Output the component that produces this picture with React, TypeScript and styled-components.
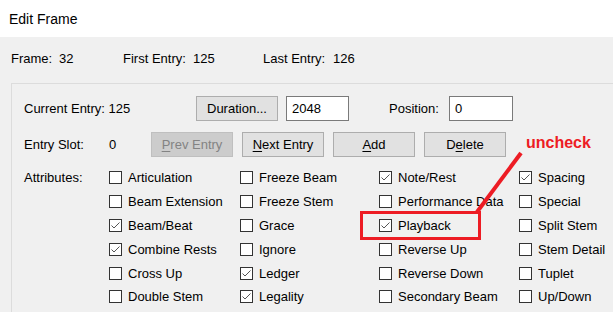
import styled, { createGlobalStyle } from 'styled-components';

const GlobalStyle = createGlobalStyle`
  html, body {
    margin: 0;
    padding: 0;
    background: #f0f0f0;
  }
  body {
    font-family: "Liberation Sans", Arial, sans-serif;
    font-size: 13px;
    color: #000;
  }
`;

const Window = styled.div`
  position: relative;
  width: 613px;
  height: 312px;
  overflow: hidden;
  background: #f0f0f0;
`;

const TitleBar = styled.div`
  height: 37px;
  background: #fff;
  display: flex;
  align-items: center;
  padding-left: 9px;
  font-size: 14px;
  color: #000;
`;

const InfoRow = styled.div`
  display: flex;
  padding: 13px 0 0 11px;
  height: 18px;
  line-height: 18px;
`;

const InfoItem = styled.div<{ $width: number; $labelWidth: number }>`
  display: flex;
  width: ${({ $width }) => $width}px;

  & > span:first-child {
    width: ${({ $labelWidth }) => $labelWidth}px;
  }
`;

const GroupBox = styled.div`
  margin: 15px 0 0 11px;
  width: 640px;
  height: 260px;
  border: 1px solid #dcdcdc;
  padding: 12px 0 0 12px;
  box-sizing: border-box;
`;

const Row = styled.div<{ $top?: number }>`
  display: flex;
  align-items: center;
  height: 25px;
  margin-top: ${({ $top }) => $top ?? 0}px;
`;

const Label = styled.div<{ $width: number }>`
  width: ${({ $width }) => $width}px;
  flex-shrink: 0;
  white-space: nowrap;
`;

const Button = styled.button<{ $width?: number; $gap?: number }>`
  box-sizing: border-box;
  width: ${({ $width }) => $width ?? 82}px;
  height: 25px;
  margin-left: ${({ $gap }) => $gap ?? 0}px;
  background: #e1e1e1;
  border: 1px solid #adadad;
  font-family: inherit;
  font-size: 13px;
  color: #000;
  padding: 0;
  flex-shrink: 0;

  &:disabled {
    background: #cccccc;
    border-color: #bfbfbf;
    color: #838383;
  }

  u {
    text-underline-offset: 2px;
  }
`;

const Input = styled.div<{ $width: number; $gap?: number }>`
  box-sizing: border-box;
  width: ${({ $width }) => $width}px;
  height: 25px;
  margin-left: ${({ $gap }) => $gap ?? 0}px;
  background: #fff;
  border: 1px solid #7a7a7a;
  padding: 0 5px;
  display: flex;
  align-items: center;
  flex-shrink: 0;
`;

const AttrSection = styled.div`
  display: flex;
  margin-top: 9px;
`;

const AttrLabel = styled.div`
  width: 85px;
  height: 24px;
  line-height: 24px;
`;

const AttrGrid = styled.div`
  display: grid;
  grid-template-columns: 131px 139px 140px 120px;
  grid-template-rows: repeat(6, 23.8px);
  grid-auto-flow: column;
`;

const CheckItem = styled.label`
  display: flex;
  align-items: center;
  white-space: nowrap;
`;

const Box = styled.span`
  box-sizing: border-box;
  width: 13px;
  height: 13px;
  border: 1px solid #333;
  background: #fff;
  margin-right: 6px;
  display: flex;
  align-items: center;
  justify-content: center;
`;

const Highlight = styled.div`
  position: absolute;
  left: 360px;
  top: 211px;
  width: 121px;
  height: 29px;
  box-sizing: border-box;
  border: 3px solid #ed1c24;
`;

const Pointer = styled.svg`
  position: absolute;
  left: 0;
  top: 0;
  pointer-events: none;
`;

const Note = styled.span`
  position: absolute;
  left: 526px;
  top: 134px;
  font-size: 16px;
  font-weight: bold;
  color: #ed1c24;
`;

const attributes: [string, boolean][] = [
  ['Articulation', false],
  ['Beam Extension', false],
  ['Beam/Beat', true],
  ['Combine Rests', true],
  ['Cross Up', false],
  ['Double Stem', false],
  ['Freeze Beam', false],
  ['Freeze Stem', false],
  ['Grace', false],
  ['Ignore', false],
  ['Ledger', true],
  ['Legality', true],
  ['Note/Rest', true],
  ['Performance Data', false],
  ['Playback', true],
  ['Reverse Up', false],
  ['Reverse Down', false],
  ['Secondary Beam', false],
  ['Spacing', true],
  ['Special', false],
  ['Split Stem', false],
  ['Stem Detail', false],
  ['Tuplet', false],
  ['Up/Down', false],
];

const Check = () => (
  <svg width="11" height="11" viewBox="0 0 11 11">
    <path d="M1.5 5.5 L4 8 L9.5 2.5" fill="none" stroke="#555" strokeWidth="1" />
  </svg>
);

export default function App() {
  return (
    <Window>
      <GlobalStyle />
      <TitleBar>Edit Frame</TitleBar>
      <InfoRow>
        <InfoItem $width={112} $labelWidth={48}>
          <span>Frame:</span>
          <span>32</span>
        </InfoItem>
        <InfoItem $width={140} $labelWidth={70}>
          <span>First Entry:</span>
          <span>125</span>
        </InfoItem>
        <InfoItem $width={140} $labelWidth={70}>
          <span>Last Entry:</span>
          <span>126</span>
        </InfoItem>
      </InfoRow>
      <GroupBox>
        <Row>
          <Label $width={172}>Current Entry: 125</Label>
          <Button>Duration...</Button>
          <Input $width={63} $gap={8}>2048</Input>
          <Label $width={60} style={{ marginLeft: 40 }}>Position:</Label>
          <Input $width={64}>0</Input>
        </Row>
        <Row $top={11}>
          <Label $width={85}>Entry Slot:</Label>
          <Label $width={42}>0</Label>
          <Button disabled>
            <u>P</u>rev Entry
          </Button>
          <Button $gap={9}>
            <u>N</u>ext Entry
          </Button>
          <Button $gap={9}>
            <u>A</u>dd
          </Button>
          <Button $gap={9}>
            D<u>e</u>lete
          </Button>
        </Row>
        <AttrSection>
          <AttrLabel>Attributes:</AttrLabel>
          <AttrGrid>
            {attributes.map(([name, checked]) => (
              <CheckItem key={name}>
                <Box>{checked && <Check />}</Box>
                {name}
              </CheckItem>
            ))}
          </AttrGrid>
        </AttrSection>
      </GroupBox>
      <Highlight />
      <Pointer width="613" height="312">
        <line x1="477" y1="212" x2="521" y2="153" stroke="#ed1c24" strokeWidth="4" />
      </Pointer>
      <Note>uncheck</Note>
    </Window>
  );
}
